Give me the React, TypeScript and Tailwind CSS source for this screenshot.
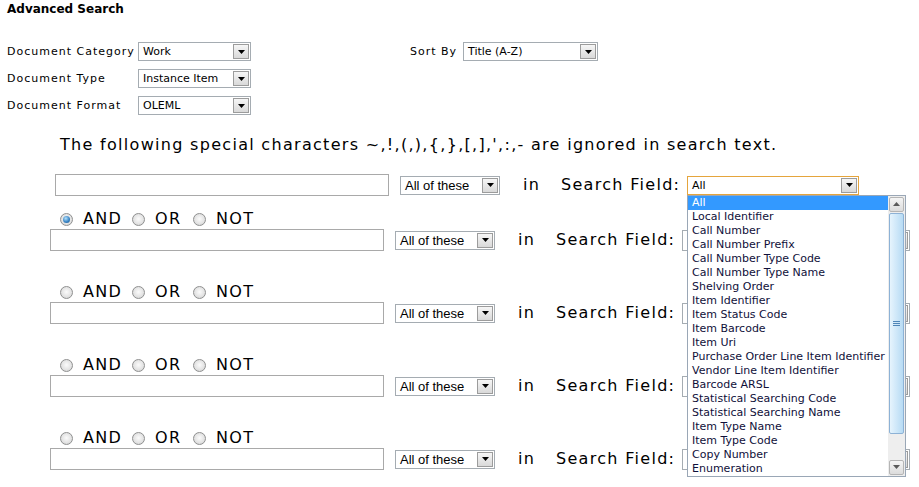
import React from "react";

const V = "font-['DejaVu_Sans',Verdana,sans-serif]";
const A = "font-['Liberation_Sans',Arial,sans-serif]";

function Arrow({ color = "#000" }: { color?: string }) {
  return (
    <svg width="7" height="4" viewBox="0 0 7 4">
      <path d="M0 0H7L3.5 4Z" fill={color} />
    </svg>
  );
}

function DropBtn() {
  return (
    <div className="m-[1px] flex w-[16px] shrink-0 items-center justify-center border border-[#9c9c9c] bg-gradient-to-b from-[#f6f6f6] to-[#d9d9d9]">
      <Arrow />
    </div>
  );
}

function Sel({
  text,
  className,
  textClass,
  children,
}: {
  text: string;
  className: string;
  textClass: string;
  children?: React.ReactNode;
}) {
  return (
    <div className={`relative flex shrink-0 border bg-white ${className}`}>
      <div className={`flex-1 overflow-hidden whitespace-nowrap pl-[4px] text-black ${textClass}`}>{text}</div>
      <DropBtn />
      {children}
    </div>
  );
}

function Radio({ checked }: { checked?: boolean }) {
  return (
    <span className="inline-flex h-[13px] w-[13px] shrink-0 items-center justify-center rounded-full border border-[#8f9090] bg-[radial-gradient(circle_at_50%_45%,#fbfbfb_0%,#e2e2e2_60%,#c9c9c9_100%)]">
      {checked && (
        <span className="h-[7px] w-[7px] rounded-full bg-[radial-gradient(circle_at_40%_35%,#b5e2fc_0%,#3b86c6_55%,#164f86_100%)]" />
      )}
    </span>
  );
}

const ITEMS = [
  "All",
  "Local Identifier",
  "Call Number",
  "Call Number Prefix",
  "Call Number Type Code",
  "Call Number Type Name",
  "Shelving Order",
  "Item Identifier",
  "Item Status Code",
  "Item Barcode",
  "Item Uri",
  "Purchase Order Line Item Identifier",
  "Vendor Line Item Identifier",
  "Barcode ARSL",
  "Statistical Searching Code",
  "Statistical Searching Name",
  "Item Type Name",
  "Item Type Code",
  "Copy Number",
  "Enumeration",
];

function ScrollBtn({ up }: { up?: boolean }) {
  return (
    <div className="flex h-[15px] shrink-0 items-center justify-center rounded-[2px] border border-[#b5b5b5] bg-gradient-to-b from-[#f5f5f5] to-[#dcdcdc]">
      <svg width="7" height="4" viewBox="0 0 7 4">
        <path d={up ? "M0 4H7L3.5 0Z" : "M0 0H7L3.5 4Z"} fill="#5a5a5a" />
      </svg>
    </div>
  );
}

function DropList() {
  return (
    <div className="absolute left-[-1px] top-[18px] z-10 flex h-[282px] w-[219px] border border-[#9aa7b6] bg-white">
      <div className="flex w-[200px] flex-col">
        {ITEMS.map((it, i) => (
          <div
            key={it}
            className={`h-[14px] whitespace-nowrap pl-[4px] text-[11px] leading-[14px] ${V} ${
              i === 0 ? "bg-[#3399ff] text-white" : "text-[#10103a]"
            }`}
          >
            {it}
          </div>
        ))}
      </div>
      <div className="flex w-[17px] flex-col bg-[#eeeeee] p-[1px]">
        <ScrollBtn up />
        <div className="mt-[1px] flex h-[221px] items-center justify-center rounded-[2px] border border-[#8db2d6] bg-gradient-to-r from-[#e6f4fd] to-[#b7dbf4]">
          <div className="flex flex-col gap-[1px]">
            <div className="h-[1px] w-[7px] bg-[#4f86b8]" />
            <div className="h-[1px] w-[7px] bg-[#4f86b8]" />
            <div className="h-[1px] w-[7px] bg-[#4f86b8]" />
          </div>
        </div>
        <div className="flex-1" />
        <ScrollBtn />
      </div>
    </div>
  );
}

const BIG = `${V} text-[16px] tracking-[1.3px] leading-[20px] text-black whitespace-nowrap`;

function RadioRow({ checked }: { checked?: boolean }) {
  return (
    <div className="ml-[60px] flex h-[18px] items-center">
      <div className="flex w-[72px] items-center">
        <Radio checked={checked} />
        <span className={`ml-[10px] ${BIG}`}>AND</span>
      </div>
      <div className="flex w-[61px] items-center">
        <Radio />
        <span className={`ml-[10px] ${BIG}`}>OR</span>
      </div>
      <div className="flex items-center">
        <Radio />
        <span className={`ml-[10px] ${BIG}`}>NOT</span>
      </div>
    </div>
  );
}

function InputRow({ first }: { first?: boolean }) {
  return (
    <div className={`flex h-[22px] items-center ${first ? "ml-[55px]" : "ml-[50px]"}`}>
      <div className="h-[22px] w-[334px] shrink-0 border border-[#a9a9a9] bg-white" />
      <Sel
        text="All of these"
        className="ml-[11px] h-[19px] w-[100px] border-[#a5acb2]"
        textClass={`${A} text-[13px] leading-[17px]`}
      />
      <span className={`ml-[23px] w-[38px] ${BIG}`}>in</span>
      <span className={`w-[126px] ${BIG}`}>Search Field:</span>
      {first ? (
        <Sel
          text="All"
          className="h-[19px] w-[172px] border-[#e5a53d]"
          textClass={`${V} text-[11px] leading-[17px]`}
        >
          <DropList />
        </Sel>
      ) : (
        <Sel
          text=""
          className="h-[21px] w-[228px] border-[#a5acb2]"
          textClass={`${V} text-[11px] leading-[19px]`}
        />
      )}
    </div>
  );
}

export default function App() {
  const label = `${V} text-[11px] tracking-[1px] text-black whitespace-nowrap`;
  const selTxt = `${V} text-[11px] leading-[17px]`;
  return (
    <div className="relative h-[487px] w-[919px] overflow-hidden bg-white">
      <div className="pl-[7px] pt-[2px]">
        <div className={`${V} text-[12px] font-bold leading-[14px] text-black`}>Advanced Search</div>
        <div className="mt-[26px] flex flex-col gap-[8px]">
          <div className="flex h-[19px] items-center">
            <span className={`w-[131px] pt-[1px] ${label}`}>Document Category</span>
            <Sel text="Work" className="h-[19px] w-[113px] border-[#a5acb2]" textClass={selTxt} />
            <span className={`ml-[159px] w-[53px] pt-[1px] ${label}`}>Sort By</span>
            <Sel text="Title (A-Z)" className="h-[19px] w-[135px] border-[#a5acb2]" textClass={selTxt} />
          </div>
          <div className="flex h-[19px] items-center">
            <span className={`w-[131px] pt-[1px] ${label}`}>Document Type</span>
            <Sel text="Instance Item" className="h-[19px] w-[113px] border-[#a5acb2]" textClass={selTxt} />
          </div>
          <div className="flex h-[19px] items-center">
            <span className={`w-[131px] pt-[1px] ${label}`}>Document Format</span>
            <Sel text="OLEML" className="h-[19px] w-[113px] border-[#a5acb2]" textClass={selTxt} />
          </div>
        </div>
        <div className={`ml-[53px] mt-[20px] ${BIG}`}>
          The following special characters ~,!,(,),{"{"},{"}"},[,],',:,- are ignored in search text.
        </div>
      </div>
      <div className="mt-[19px] flex flex-col">
        <InputRow first />
        <div className="mt-[14px]">
          <RadioRow checked />
        </div>
        <div className="mt-[1px]">
          <InputRow />
        </div>
        {[0, 1, 2].map((k) => (
          <div key={k}>
            <div className="mt-[32px]">
              <RadioRow />
            </div>
            <div className="mt-[1px]">
              <InputRow />
            </div>
          </div>
        ))}
      </div>
    </div>
  );
}
